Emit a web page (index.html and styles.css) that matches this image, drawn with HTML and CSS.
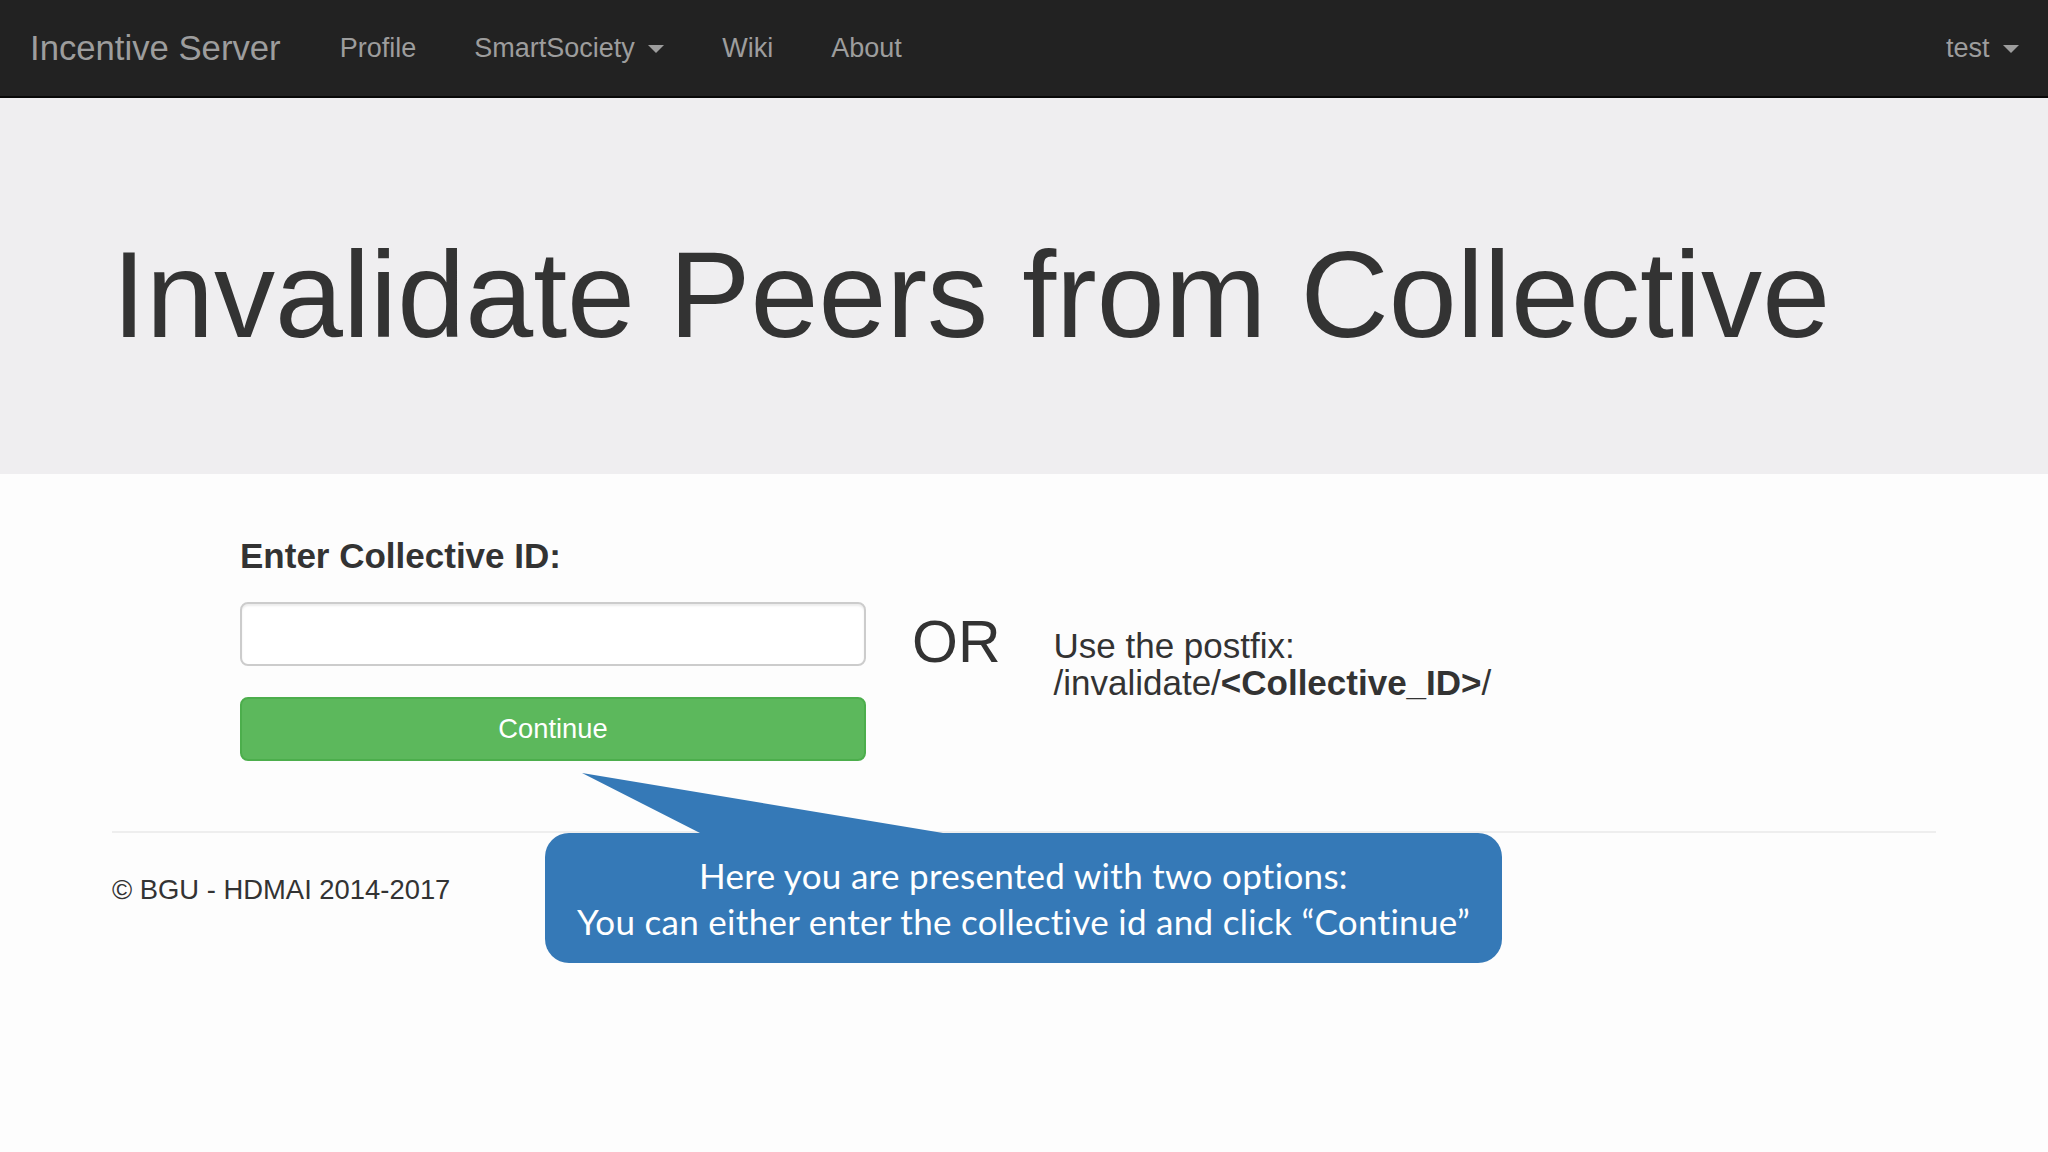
FILE: index.html
```html
<!DOCTYPE html>
<html lang="en">
<head>
<meta charset="utf-8">
<title>Invalidate Peers from Collective</title>
<link rel="stylesheet" href="styles.css">
</head>
<body>
<div class="page">
  <nav class="navbar">
    <a class="brand" href="#">Incentive Server</a>
    <ul class="nav">
      <li><a href="#">Profile</a></li>
      <li><a href="#">SmartSociety <span class="caret"></span></a></li>
      <li><a href="#">Wiki</a></li>
      <li><a href="#">About</a></li>
    </ul>
    <ul class="nav nav-right">
      <li><a href="#">test <span class="caret"></span></a></li>
    </ul>
  </nav>

  <header class="jumbotron">
    <div class="container">
      <h1 class="title">Invalidate Peers from Collective</h1>
    </div>
  </header>

  <main class="container main">
    <div class="form-row">
      <form class="form-col">
        <label class="label" for="cid">Enter Collective ID:</label>
        <input class="input" id="cid" type="text">
        <button class="btn" type="button">Continue</button>
      </form>
      <div class="or">OR</div>
      <div class="postfix">Use the postfix:<br>/invalidate/<b>&lt;Collective_ID&gt;</b>/</div>
    </div>
    <hr class="rule">
    <footer class="footer">© BGU - HDMAI 2014-2017</footer>
  </main>

  <div class="callout">
    <svg class="tail" width="400" height="62" viewBox="0 0 400 62">
      <polygon points="37,0 155,60 155,62 398,62 398,60" fill="#3579b7"/>
    </svg>
    <div class="bubble">Here you are presented with two options:<br>You can either enter the collective id and click “Continue”</div>
  </div>
</div>
</body>
</html>
```

FILE: styles.css
```css
* { box-sizing: border-box; }

html, body {
  margin: 0;
  padding: 0;
  background: #fff;
}

body {
  font-family: "Liberation Sans", Arial, sans-serif;
  color: #333;
  width: 2048px;
  height: 1152px;
  overflow: hidden;
}

.page {
  position: relative;
  min-height: 1152px;
  background: #fdfdfd;
}

/* ---------- Navbar ---------- */
.navbar {
  display: flex;
  align-items: center;
  height: 98px;
  background: #222;
  border-bottom: 2px solid #080808;
}

.brand {
  font-size: 34.7px;
  color: #9d9d9d;
  text-decoration: none;
  padding: 0 30px 0 30px;
}

.nav {
  display: flex;
  list-style: none;
  margin: 0;
  padding: 0;
}

.nav a {
  display: block;
  font-size: 27px;
  color: #9d9d9d;
  text-decoration: none;
  padding: 0 29px;
}

.nav-right {
  margin-left: auto;
}

.caret {
  display: inline-block;
  width: 0;
  height: 0;
  margin-left: 6px;
  vertical-align: middle;
  border-top: 8px solid #9d9d9d;
  border-left: 8px solid transparent;
  border-right: 8px solid transparent;
}

/* ---------- Jumbotron ---------- */
.jumbotron {
  background: #efeef0;
  height: 376px;
}

.container {
  width: 1824px;
  margin: 0 auto;
}

.title {
  margin: 0;
  padding-top: 130px;
  font-size: 122.2px;
  line-height: 134px;
  font-weight: normal;
  color: #333;
}

/* ---------- Main ---------- */
.main {
  padding-top: 63px;
}

.form-row {
  display: flex;
  align-items: flex-start;
  padding-left: 128px;
}

.form-col {
  display: flex;
  flex-direction: column;
  width: 626px;
  margin: 0;
}

.label {
  font-size: 35px;
  line-height: 38px;
  font-weight: bold;
  color: #333;
  margin-bottom: 27px;
}

.input {
  height: 64px;
  border: 2px solid #ccc;
  border-radius: 8px;
  background: #fff;
  box-shadow: inset 0 2px 2px rgba(0, 0, 0, 0.075);
  margin: 0 0 31px 0;
  font-size: 27px;
}

.btn {
  height: 64px;
  border: 2px solid #4cae4c;
  border-radius: 8px;
  background: #5cb85c;
  color: #fff;
  font-family: "Liberation Sans", Arial, sans-serif;
  font-size: 27.3px;
  padding: 0;
}

.or {
  margin-left: 46px;
  margin-top: 73px;
  font-size: 59px;
  line-height: 65px;
  color: #333;
}

.postfix {
  margin-left: 53px;
  margin-top: 90px;
  font-size: 35px;
  line-height: 37px;
  color: #333;
}

.postfix b {
  font-weight: bold;
}

.rule {
  margin: 70px 0 0 0;
  border: 0;
  border-top: 2px solid #eee;
  height: 0;
}

.footer {
  margin-top: 42px;
  font-size: 27.4px;
  line-height: 30px;
  color: #333;
}

/* ---------- Callout overlay ---------- */
.callout {
  position: absolute;
  left: 545px;
  top: 833px;
  width: 957px;
}

.tail {
  position: absolute;
  left: 0;
  top: -60px;
  display: block;
}

.bubble {
  position: relative;
  background: #3579b7;
  border-radius: 24px;
  padding: 19px 0;
  text-align: center;
  color: #fff;
  font-family: Lato, "Open Sans", sans-serif;
  font-size: 35px;
  letter-spacing: 0.3px;
  line-height: 46px;
}
```
